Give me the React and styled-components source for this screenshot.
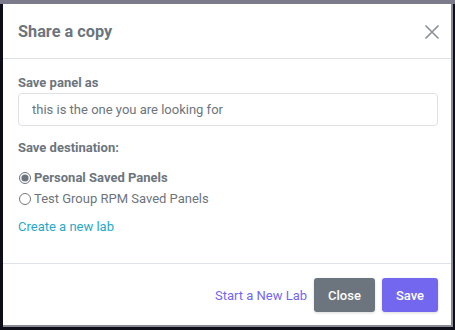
import React from "react";
import styled, { createGlobalStyle } from "styled-components";

const Global = createGlobalStyle`
  html, body { margin: 0; padding: 0; }
  body {
    background: #0e0e1a;
    font-family: Roboto, "Noto Sans", Arial, sans-serif;
    width: 455px;
    height: 330px;
    overflow: hidden;
  }
`;

const Backdrop = styled.div`
  box-sizing: border-box;
  width: 455px;
  height: 330px;
  border-top: 4px solid #7b7b8b;
  padding: 0 2px 1px 1px;
  background: #0e0e1a;
`;

const Modal = styled.div`
  box-sizing: border-box;
  height: 323px;
  margin-left: 2px;
  background: #fff;
  border-right: 2px solid #8a8a98;
  border-bottom: 2px solid #8a8a98;
  display: flex;
  flex-direction: column;
`;

const Header = styled.div`
  height: 55px;
  box-sizing: border-box;
  display: flex;
  align-items: center;
  justify-content: space-between;
  padding: 1px 10px 0 15px;
  border-bottom: 1px solid #dee2e6;
`;

const Title = styled.h5`
  margin: 0;
  font-size: 16.3px;
  font-weight: 700;
  color: #6c757d;
`;

const CloseX = styled.button`
  border: 0;
  background: none;
  padding: 0;
  width: 18px;
  height: 18px;
  display: flex;
  align-items: center;
  justify-content: center;
  cursor: pointer;
`;

const Body = styled.div`
  flex: 1;
  padding: 15px 13px 0 15px;
  border-bottom: 1px solid #dee2e6;
`;

const Label = styled.div`
  font-size: 13px;
  font-weight: 700;
  color: #6c757d;
  line-height: 18px;
`;

const Input = styled.input`
  box-sizing: border-box;
  display: block;
  width: 100%;
  height: 33px;
  margin-top: 1px;
  border: 1px solid #dee2e6;
  border-radius: 4px;
  padding: 0 13px;
  font-family: Roboto, Arial, sans-serif;
  font-size: 13px;
  color: #6c757d;
  margin-bottom: 13px;
  outline: none;
`;

const RadioRow = styled.label`
  display: flex;
  align-items: center;
  gap: 3px;
  font-size: 13px;
  line-height: 20px;
  height: 20px;
  color: #6c757d;
  font-weight: ${(p) => (p.$bold ? 700 : 400)};
`;

const Radio = styled.input`
  margin: 0 0 0 1px;
  width: 12px;
  height: 12px;
  accent-color: #6c757d;
`;

const RadioGroup = styled.div`
  margin-top: 11px;
  display: flex;
  flex-direction: column;
  gap: 1px;
`;

const Link = styled.a`
  display: inline-block;
  margin-top: ${(p) => p.$mt || 0}px;
  font-size: 13px;
  color: ${(p) => p.$color};
  text-decoration: none;
  cursor: pointer;
`;

const Footer = styled.div`
  flex: 0 0 61px;
  box-sizing: border-box;
  display: flex;
  align-items: center;
  justify-content: flex-end;
  gap: 7px;
  padding: 1px 13px 0 0;
`;

const Button = styled.button`
  height: 34px;
  border: 0;
  border-radius: 3px;
  padding: 0 ${(p) => p.$px}px;
  font-family: Roboto, Arial, sans-serif;
  font-size: 13px;
  font-weight: 500;
  color: #fff;
  background: ${(p) => p.$bg};
  box-shadow: 0 1px 3px rgba(0, 0, 0, 0.15);
`;

export default function App() {
  return (
    <>
      <Global />
      <Backdrop>
        <Modal>
          <Header>
            <Title>Share a copy</Title>
            <CloseX aria-label="close">
              <svg width="16" height="16" viewBox="0 0 16 16">
                <path d="M1.5 1.5L14.5 14.5M14.5 1.5L1.5 14.5" stroke="#8a9099" strokeWidth="1.6" fill="none" />
              </svg>
            </CloseX>
          </Header>
          <Body>
            <Label>Save panel as</Label>
            <Input defaultValue="this is the one you are looking for" />
            <Label>Save destination:</Label>
            <RadioGroup>
              <RadioRow $bold>
                <Radio type="radio" name="dest" defaultChecked />
                Personal Saved Panels
              </RadioRow>
              <RadioRow>
                <Radio type="radio" name="dest" />
                Test Group RPM Saved Panels
              </RadioRow>
            </RadioGroup>
            <Link $color="#28a8c8" $mt={10}>Create a new lab</Link>
          </Body>
          <Footer>
            <Link $color="#7367f0">Start a New Lab</Link>
            <Button $bg="#6c757d" $px={14}>Close</Button>
            <Button $bg="#7367f0" $px={14}>Save</Button>
          </Footer>
        </Modal>
      </Backdrop>
    </>
  );
}
